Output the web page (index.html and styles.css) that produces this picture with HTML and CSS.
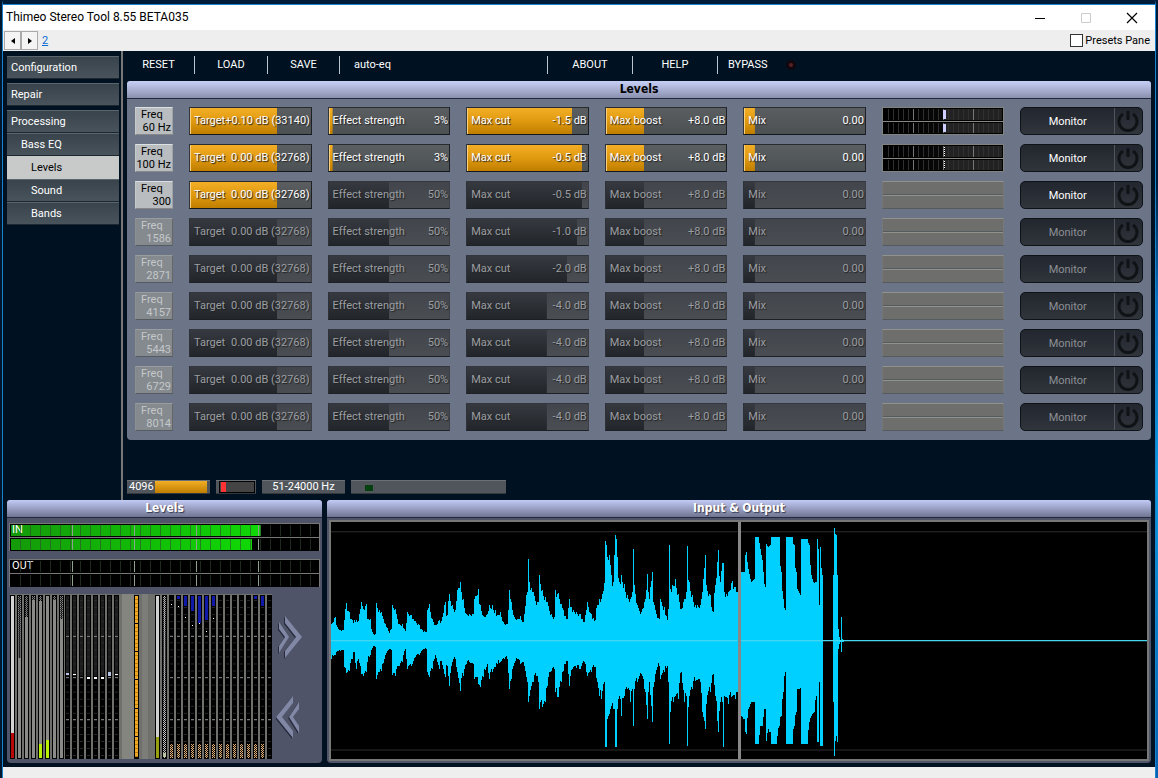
FILE: index.html
```html
<!DOCTYPE html>
<html lang="en">
    <head>
        <title>Thimeo Stereo Tool 8.55 BETA035</title>
        <meta charset="utf-8">
        <meta name="viewport" content="width=device-width, initial-scale=1.0">
        <link rel="stylesheet" href="styles.css">
    </head>
    <body>
        <div class="window">

            <header class="titlebar">
                <span class="title">Thimeo Stereo Tool 8.55 BETA035</span>
                <button type="button" class="win-btn" aria-label="Minimize">
                    <svg width="12" height="12" viewBox="0 0 12 12"><path d="M1 6.5h10" stroke="#000"/></svg>
                </button>
                <button type="button" class="win-btn" aria-label="Maximize" disabled>
                    <svg width="12" height="12" viewBox="0 0 12 12"><path d="M1.500 1.500h9v9h-9z" stroke="#ccc" fill="none"/></svg>
                </button>
                <button type="button" class="win-btn" aria-label="Close">
                    <svg width="12" height="12" viewBox="0 0 12 12"><path d="M1 1l10 10M11 1L1 11" stroke="#000" stroke-width="1.200"/></svg>
                </button>
            </header>

            <div class="toolbar">
                <button type="button" class="step" aria-label="Previous preset">
                    <svg width="4" height="6" viewBox="0 0 4 6"><path d="M4 0v6L0 3z"/></svg>
                </button>
                <button type="button" class="step" aria-label="Next preset">
                    <svg width="4" height="6" viewBox="0 0 4 6"><path d="M0 0v6l4-3z"/></svg>
                </button>
                <a class="preset" href="#">2</a>
                <input type="checkbox" id="presets" class="check">
                <label for="presets">Presets Pane</label>
            </div>

            <div class="app">
                <div class="upper">
                    <nav class="sidebar">
                        <button type="button" class="nav-top">Configuration</button>
                        <button type="button" class="nav-top">Repair</button>
                        <button type="button" class="nav-top">Processing</button>
                        <button type="button" class="nav-sub">Bass EQ</button>
                        <button type="button" class="nav-leaf active">Levels</button>
                        <button type="button" class="nav-leaf">Sound</button>
                        <button type="button" class="nav-leaf">Bands</button>
                    </nav>

                    <main class="main">
                        <div class="menu">
                            <button type="button">RESET</button>
                            <button type="button">LOAD</button>
                            <button type="button">SAVE</button>
                            <button type="button" class="left">auto-eq</button>
                            <button type="button">ABOUT</button>
                            <button type="button">HELP</button>
                            <button type="button" class="left bypass">BYPASS <span class="led"></span></button>
                        </div>

                        <section class="panel eq">
                            <h2 class="dark">Levels</h2>
                            <div class="rows" id="rows"></div>
                        </section>

                        <div class="status">
                            <span class="stat quality">4096<i></i></span>
                            <span class="stat load"><i></i></span>
                            <span class="stat">51-24000 Hz</span>
                            <span class="stat latency"><i></i></span>
                        </div>
                    </main>
                </div>

                <div class="lower">
                    <section class="panel levels">
                        <h2>Levels</h2>
                        <div class="io">
                            <div class="bar"><i style="width: 81%"></i><span>IN</span></div>
                            <div class="bar"><i style="width: 78%"></i></div>
                            <div class="bar out"><span>OUT</span></div>
                            <div class="bar"></div>
                        </div>
                        <div class="meters">
                            <svg id="bands" class="bands" viewBox="0 0 262 164" preserveAspectRatio="none" shape-rendering="crispEdges">
                                <defs>
                                    <pattern id="seg" width="5" height="7" patternUnits="userSpaceOnUse">
                                        <path d="M0 6h5v1H0z" fill="#2b2b2b"/>
                                    </pattern>
                                    <pattern id="check" width="2" height="2" patternUnits="userSpaceOnUse">
                                        <path d="M0 0h1v1H0zM1 1h1v1H1z" fill="#8a8a8a"/>
                                    </pattern>
                                    <pattern id="light" width="2" height="2" patternUnits="userSpaceOnUse">
                                        <path d="M0 0h1v1H0zM1 1h1v1H1z" fill="#ccc"/>
                                    </pattern>
                                    <pattern id="tan" width="2" height="2" patternUnits="userSpaceOnUse">
                                        <path d="M0 0h1v1H0zM1 1h1v1H1z" fill="#f0b878"/>
                                    </pattern>
                                </defs>
                            </svg>
                            <div class="pager">
                                <button type="button" aria-label="Next meters">
                                    <svg width="28" height="46" viewBox="0 0 28 46">
                                        <g fill="#262a3c" transform="translate(-1 1)"><path d="M3 8l10 15L3 39v-7l6-9-6-8zM9 2l17 21L9 44v-7l11-14L9 9z"/></g>
                                        <path fill="#8188a5" d="M3 8l10 15L3 39v-7l6-9-6-8zM9 2l17 21L9 44v-7l11-14L9 9z"/>
                                    </svg>
                                </button>
                                <button type="button" aria-label="Previous meters">
                                    <svg width="28" height="46" viewBox="0 0 28 46">
                                        <g fill="#262a3c" transform="translate(-1 1)"><path d="M23 8L13 23l10 16v-7l-6-9 6-8zM17 2L0 23l17 21v-7L6 23 17 9z"/></g>
                                        <path fill="#8188a5" d="M23 8L13 23l10 16v-7l-6-9 6-8zM17 2L0 23l17 21v-7L6 23 17 9z"/>
                                    </svg>
                                </button>
                            </div>
                        </div>
                    </section>

                    <section class="panel scope">
                        <h2>Input &amp; Output</h2>
                        <div class="waves">
                            <svg id="input" viewBox="18 80 1218 710" preserveAspectRatio="none"></svg>
                            <svg id="output" viewBox="423 80 1218 710" preserveAspectRatio="none"></svg>
                        </div>
                    </section>
                </div>
            </div>

            <footer class="foot"></footer>
        </div>
        <script src="script.js"></script>
    </body>
</html>
```

FILE: styles.css
```css
:root {
    --navy: #001222;
    --panel: #6c7488;
    --shade: #505468;
    --edge: #1b82cd;
}
* {
    box-sizing: border-box;
}
body {
    margin: 0;
    font-family: Roboto, Tahoma, sans-serif;
    font-size: 11px;
    line-height: 14px;
    color: white;
    background: linear-gradient(90deg, #00172e 50%, transparent 50%), linear-gradient(#001c38 180px, #0a70c0 300px, #0a9ae0 480px, #0860b0);
}
button {
    padding: 0;
    border: 0;
    background: none;
    font: inherit;
    color: inherit;
}
h2 {
    margin: 0;
    height: 18px;
    font-family: "DejaVu Sans Condensed", Tahoma, sans-serif;
    font-size: 12px;
    line-height: 17px;
    text-align: center;
    text-shadow: 1px 1px 1px #333850;
    border-bottom: 1px solid #22283e;
    border-radius: 3px 3px 0 0;
    background: linear-gradient(#c3caf5, #6f7590);
}
h2.dark {
    color: black;
    text-shadow: none;
    background: linear-gradient(#c8cff6, #8a91ae);
}
svg {
    display: block;
}
.window {
    display: flex;
    flex-direction: column;
    min-height: 100vh;
    margin: 0 2px;
    border: 1px solid var(--edge);
    border-top: 5px solid #001c38;
}

/* title bar and presets bar */
.titlebar {
    display: flex;
    height: 25px;
    background: white;
    color: black;
    box-shadow: 0 -1px var(--edge);
}
.title {
    flex: 1;
    padding-left: 3px;
    font-size: 12px;
    line-height: 24px;
}
.win-btn {
    display: grid;
    place-items: center;
    width: 46px;
}
.toolbar {
    display: flex;
    align-items: center;
    height: 21px;
    padding: 0 5px 0 1px;
    background: #eee;
    color: black;
}
.step {
    display: grid;
    place-items: center;
    width: 17px;
    height: 19px;
    border: 1px solid #aaa;
    background: #f4f4f4;
}
.preset {
    margin: 0 auto 0 4px;
    color: #0a6cd0;
}
.check {
    appearance: none;
    width: 13px;
    height: 13px;
    margin: 0 2px 0 0;
    border: 1px solid #333;
    background: white;
}

.app {
    flex: 1;
    display: flex;
    flex-direction: column;
    padding: 0 4px 4px;
    background: var(--navy);
}
.upper {
    display: flex;
}

/* sidebar */
.sidebar {
    width: 116px;
    padding: 5px 2px 0 0;
    border-right: 2px solid #777;
}
.sidebar button {
    display: block;
    width: 100%;
    height: 23px;
    padding-left: 4px;
    text-align: left;
    border-top: 1px solid #5a666e;
    border-bottom: 1px solid #1c272f;
    background: linear-gradient(#38434b, #48535b);
}
.sidebar .nav-top + .nav-top {
    margin-top: 4px;
}
.sidebar .nav-sub {
    padding-left: 14px;
}
.sidebar .nav-leaf {
    padding-left: 24px;
}
.sidebar .active {
    color: black;
    border-color: #c8caca;
    background: #c8caca;
}

/* top menu */
.main {
    flex: 1;
    min-width: 0;
}
.menu {
    display: grid;
    grid-template-columns: 72px 73px 72px 208px 85px 85px 1fr;
    height: 29px;
    padding: 5px 0 6px;
}
.menu button {
    line-height: 18px;
    border-right: 1px solid #b8c4d0;
}
.menu .left {
    padding-left: 14px;
    text-align: left;
}
.menu .bypass {
    padding-left: 10px;
    border: 0;
}
.led {
    display: inline-block;
    width: 10px;
    height: 10px;
    margin: 0 0 -2px 16px;
    border: 3px solid #10080e;
    border-radius: 50%;
    background: #5a2028;
}

.panel {
    border-radius: 4px;
    background: var(--shade);
}

/* levels rows */
.eq {
    margin: 1px 0 0 4px;
    background: var(--panel);
}
.rows {
    display: grid;
    gap: 9px;
    padding: 8px 8px 9px;
}
.row {
    display: grid;
    grid-template-columns: 38px repeat(7, minmax(0, 1fr));
    gap: 16px;
    height: 28px;
}
.freq {
    padding: 0 1px 0 5px;
    line-height: 13px;
    text-align: left;
    color: black;
    border: 1px solid;
    border-color: #dde0e2 #a0a4a6 #888 #c8caca;
    background: #b9bdbf;
}
.freq span {
    display: block;
    margin-left: -5px;
    text-align: right;
}
.freq.off {
    color: #c4c8ca;
    border-color: #999da0 #666 #555b60 #8c9092;
    background: #858a8f;
}
.slider {
    display: grid;
    grid-template-columns: auto 1fr;
    line-height: 25px;
    text-shadow: 1px 1px 1px #222;
    white-space: nowrap;
    border: 1px solid;
    border-color: #282c30 #1d2126 #14181c #33373c;
}
.slider * {
    grid-row: 1;
}
.slider label {
    grid-column: 1;
    z-index: 1;
    padding-left: 4px;
    pointer-events: none;
}
.slider output {
    grid-column: 2;
    z-index: 1;
    padding-right: 1px;
    text-align: right;
    pointer-events: none;
}
.slider input {
    grid-column: 1 / 3;
    appearance: none;
    width: 100%;
    height: 26px;
    margin: 0;
    background: linear-gradient(#f2ae26, #e09a10 50%, #c07e00) 0 0 / var(--fill) 100% no-repeat, linear-gradient(#5a5e61, #4c5154);
    box-shadow: inset 1px 0 #f8d080;
}
.slider input::-webkit-slider-thumb {
    appearance: none;
    width: 1px;
    height: 1px;
}
.slider.off {
    color: #9b9ea2;
    border-color: #33373d #3c4046 #1d2126 #2e3238;
}
.slider.off input {
    background: linear-gradient(#363a40, #22262b) 0 0 / var(--fill) 100% no-repeat, linear-gradient(#42464c, #4a4e53);
    box-shadow: none;
}
.peaks {
    display: grid;
    grid-template-rows: 1fr 1fr;
    gap: 1px;
    border: 1px solid #80837e;
    background: #8a8a84;
}
.peak {
    display: flex;
    justify-content: center;
    padding: 1px 0;
    border: 1px solid black;
    background:
        repeating-linear-gradient(90deg, transparent 0 29px, #777 29px 30px),
        repeating-linear-gradient(90deg, transparent 0 4px, #303030 4px 5px),
        linear-gradient(90deg, black, #080808 50%, #222 50%);
}
.peak i {
    margin-left: 2px;
    width: 3px;
    background: #cfcfff;
}
.peak i.dots {
    width: 1px;
    background: repeating-linear-gradient(white 0 1px, black 1px 2px);
}
.peaks.off {
    gap: 0;
    border-color: #92928c #777 #555a5e #777;
    background: #6e6e6c;
}
.peaks.off .peak {
    border: 0;
    background: none;
}
.peaks.off .peak + .peak {
    border-top: 1px solid #92928c;
    box-shadow: 0 -1px #555a5e;
}
.monitor {
    display: flex;
    border: 1px solid #0f1318;
    border-radius: 5px;
    background: linear-gradient(#22262e, #30343b);
}
.monitor.off {
    color: #8c9095;
}
.monitor .listen {
    flex: 1;
    line-height: 25px;
}
.monitor .power {
    display: grid;
    place-items: center;
    width: 28px;
    border-left: 1px solid #50555c;
}

/* status strip */
.status {
    display: flex;
    gap: 6px;
    height: 15px;
    margin: 40px 0 5px 4px;
}
.stat {
    width: 83px;
    height: 14px;
    line-height: 12px;
    text-align: center;
    border-top: 1px solid #6a7076;
    border-bottom: 1px solid #33383c;
    background: #50565b;
}
.quality {
    display: flex;
    gap: 1px;
    padding: 0 3px 0 2px;
}
.quality i {
    flex: 1;
    background: linear-gradient(#f2ae26, #c07e00);
}
.load {
    width: 40px;
    padding-left: 3px;
}
.load i {
    display: block;
    width: 36px;
    height: 12px;
    border: 1px solid black;
    background: linear-gradient(90deg, #444 1px, #f33 1px 6px, #444 6px);
}
.latency {
    width: 155px;
    padding: 4px 0 0 14px;
}
.latency i {
    display: block;
    width: 8px;
    height: 6px;
    background: #063f10;
}

/* lower panels */
.lower {
    flex: 1;
    display: grid;
    grid-template-columns: 315px minmax(0, 1fr);
    gap: 5px;
}
.lower .panel {
    display: flex;
    flex-direction: column;
}
.io {
    padding: 5px 2px 0 2px;
}
.bar {
    position: relative;
    height: 14px;
    border: 1px solid #777;
    border-width: 1px 1px 0;
    background: black;
}
.bar.out {
    margin-top: 8px;
}
.bar i {
    position: absolute;
    inset: 1px auto 1px 1px;
    background: linear-gradient(90deg, #149a0a, #10d806);
}
.bar::after {
    content: "";
    position: absolute;
    inset: 1px;
    background:
        repeating-linear-gradient(90deg, transparent 0 61px, #8fa08f 61px 62px),
        repeating-linear-gradient(90deg, transparent 0 9px, rgba(50, 70, 50, 0.6) 9px 10px);
}
.bar span {
    position: absolute;
    left: 2px;
    line-height: 12px;
}
.meters {
    flex: 1;
    display: flex;
    padding: 7px 0 4px 3px;
}
.bands {
    width: 262px;
    height: 100%;
    background: #6f6f6b;
}
.pager {
    display: grid;
    align-content: center;
    gap: 34px;
    padding: 2px 0 0 4px;
}
.waves {
    flex: 1;
    display: grid;
    grid-template-columns: 1fr 1fr;
    gap: 3px;
    margin: 2px;
    border: 2px solid #777;
    background: #888;
}
.waves svg {
    width: 100%;
    height: 100%;
    min-height: 100px;
    background: black;
}
.foot {
    height: 11px;
    background: #eee;
}
```

FILE: script.js
```javascript
const svgNS = 'http://www.w3.org/2000/svg';

// freq, target, strength, [cut, fill], state
const bands = [
    ['60 Hz', '+0.10 dB (33140)', 3, ['-1.5', 87], 'on'],
    ['100 Hz', '0.00 dB (32768)', 3, ['-0.5', 95], 'on'],
    ['300', '0.00 dB (32768)', 50, ['-0.5', 95], 'half'],
    ['1586', '0.00 dB (32768)', 50, ['-1.0', 91], 'off'],
    ['2871', '0.00 dB (32768)', 50, ['-2.0', 83], 'off'],
    ['4157', '0.00 dB (32768)', 50, ['-4.0', 66], 'off'],
    ['5443', '0.00 dB (32768)', 50, ['-4.0', 66], 'off'],
    ['6729', '0.00 dB (32768)', 50, ['-4.0', 66], 'off'],
    ['8014', '0.00 dB (32768)', 50, ['-4.0', 66], 'off']
];

function slider(id, label, value, fill, on) {
    return `<div class="slider ${on ? '' : 'off'}">
        <input type="range" id="${id}" min="0" max="100" value="${fill}" style="--fill: ${fill}%">
        <label for="${id}">${label}</label><output for="${id}">${value}</output>
    </div>`;
}

function peaks(i) {
    if (i > 1) return '<div class="peaks off"><div class="peak"></div><div class="peak"></div></div>';
    const mark = i === 0 ? '<i></i>' : '<i class="dots"></i>';
    return `<div class="peaks"><div class="peak">${mark}</div><div class="peak">${mark}</div></div>`;
}

document.getElementById('rows').innerHTML = bands.map(([freq, target, strength, cut, state], i) => {
    const on = state === 'on';
    const off = state === 'off' ? 'off' : '';
    return `<div class="row">
        <button type="button" class="freq ${off}">Freq<span>${freq}</span></button>
        ${slider('target' + i, 'Target', target, 72, !off)}
        ${slider('strength' + i, 'Effect strength', strength + '%', strength, on)}
        ${slider('cut' + i, 'Max cut', cut[0] + ' dB', cut[1], on)}
        ${slider('boost' + i, 'Max boost', '+8.0 dB', 32, on)}
        ${slider('mix' + i, 'Mix', '0.00', 9, on)}
        ${peaks(i)}
        <div class="monitor ${off}">
            <button type="button" class="listen">Monitor</button>
            <button type="button" class="power" aria-label="Power">
                <svg width="22" height="22" viewBox="0 0 22 22" fill="none" stroke="#101316" stroke-width="3">
                    <path d="M6 4a9 9 0 1 0 10 0M11 1v9"/>
                </svg>
            </button>
        </div>
    </div>`;
}).join('');

document.querySelectorAll('.slider input').forEach(input => input.addEventListener('input', function() {
    this.style.setProperty('--fill', this.value + '%');
}));

// vertical band meters
const meters = document.getElementById('bands');

function rect(x, y, w, h, fill) {
    const r = document.createElementNS(svgNS, 'rect');
    Object.entries({ x, y, width: w, height: h, fill }).forEach(([k, v]) => r.setAttribute(k, v));
    meters.appendChild(r);
}

// gate meters: [checked part from the top, colour at the bottom, its height]
const gates = [[0, '#b80808', 25], [62], [21], [4], [5, '#b8f008', 14], [0, '#b8f008', 18], [4], [23]];
gates.forEach(([drop, color, height], i) => {
    const x = i * 7;
    rect(x, 1, 5, 163, 'black');
    rect(x + 1, 2, 3, 161, i === 0 ? '#d4d4d4' : '#8a8a86');
    if (drop) {
        rect(x + 1, 2, 3, drop, 'black');
        rect(x + 1, 2, 3, drop, 'url(#check)');
    }
    if (color) rect(x + 1, 163 - height, 3, height, color);
});

function segments(x, split) {
    rect(x, 1, 5, 163, 'black');
    if (split) rect(x + 1, 2, 3, 80, '#1c1c1c');
    rect(x + 1, 2, 3, 161, 'url(#seg)');
    [42, 83, 124].forEach(y => rect(x + 1, y, 3, 1, '#777'));
}

const marks = [79, 80, 0, 83, 83, 83, 78, 80];
marks.forEach((y, i) => {
    const x = 55 + i * 7;
    segments(x, true);
    if (y) rect(x + 1, y, 3, i === 6 ? 4 : i === 1 || i === 7 ? 1 : 2, i === 0 || i === 6 ? '#b8c4e8' : 'white');
});

rect(112, 0, 12, 164, '#858580');
rect(132, 0, 6, 164, '#7c7c78');
rect(124, 1, 5, 163, 'black');
for (let y = 2; y < 162; y += 4) {
    rect(125, y, 3, 3, '#f0a828');
    rect(125, y + 3, 3, 1, y % 28 === 26 ? 'black' : '#c07e00');
}

rect(145, 1, 5, 163, 'black');
rect(146, 2, 3, 161, '#d0d0d0');
rect(146, 142, 3, 21, '#98a010');
rect(152, 1, 5, 163, 'black');
rect(153, 2, 3, 161, 'url(#light)');
rect(153, 158, 3, 4, '#b8c4a0');

const blues = [0, 3, 10, 15, 27, 24, 10, 0, 0, 0, 0, 0, 3, 10, 0];
const dots = [10, 12, 23, 31, 29, 37, 24];
blues.forEach((height, i) => {
    const x = 159 + i * 7;
    segments(x, false);
    if (height) rect(x + 1, 2, 3, height, '#1018a8');
    if (dots[i]) rect(x + 2, dots[i], 1, 1, 'white');
    if (i < 14) rect(x + 1, 149, 3, 14, 'url(#tan)');
});

// waveform envelopes: x, top, bottom, with the centre line on y = 436
const inputWave = [
    [18,385,490],[28,365,480],[38,400,468],[54,405,465],[56,375,515],[62,322,533],[70,350,525],[80,375,490],
    [86,375,470],[92,375,520],[98,378,490],[108,320,535],[114,340,540],[122,325,530],[124,370,500],[134,370,480],
    [138,400,465],[146,420,452],[148,415,455],[152,322,550],[160,345,530],[168,350,525],[180,385,480],[192,412,462],
    [196,400,465],[199,330,538],[210,342,540],[220,385,510],[230,385,500],[240,408,462],[246,350,520],[258,360,510],
    [270,378,485],[280,388,480],[290,405,465],[302,410,460],[306,345,530],[310,325,545],[320,370,520],[330,390,480],
    [340,375,520],[348,378,495],[358,320,545],[364,360,510],[370,295,570],[380,330,500],[390,345,490],[395,285,530],
    [404,260,585],[412,310,540],[422,355,505],[432,355,500],[442,355,505],[446,310,550],[457,280,565],[464,330,575],
    [474,362,545],[486,355,505],[490,330,550],[500,330,530],[508,345,515],[516,360,505],[524,350,500],[536,385,492],
    [546,385,490],[552,283,580],[558,320,550],[564,360,510],[574,370,490],[584,362,505],[594,380,500],[602,300,545],
    [606,290,560],[609,190,620],[612,260,600],[624,290,560],[634,320,540],[638,320,560],[641,240,640],[650,285,635],
    [658,305,620],[666,320,570],[676,355,525],[686,365,520],[690,285,590],[697,292,605],[706,325,560],[714,345,525],
    [724,370,495],[732,312,570],[742,345,515],[752,350,518],[764,355,520],[776,380,500],[786,320,540],[796,355,530],
    [808,375,515],[814,330,560],[820,312,600],[828,310,610],[836,262,560],[839,136,755],[842,150,755],[846,185,670],
    [852,180,655],[862,260,640],[867,180,640],[869,118,755],[872,130,755],[876,185,640],[882,260,600],[888,240,660],
    [895,265,600],[905,300,580],[915,310,620],[919,290,580],[922,160,690],[926,270,580],[935,330,560],[947,350,535],
    [959,310,590],[966,235,670],[971,310,560],[979,230,680],[985,330,560],[1000,370,510],[1005,310,550],[1015,335,530],
    [1027,375,510],[1029,340,560],[1032,148,745],[1035,280,650],[1049,250,600],[1059,295,610],[1067,340,530],
    [1077,310,620],[1083,290,600],[1086,152,750],[1090,260,600],[1101,300,580],[1109,330,555],[1123,330,560],
    [1131,290,650],[1139,178,700],[1143,270,625],[1155,300,590],[1162,350,535],[1169,270,600],[1179,165,710],
    [1184,260,620],[1189,202,620],[1192,202,755],[1196,290,600],[1209,290,625],[1219,258,600],[1229,275,610],[1237,275,600]
];
const outputWave = [
    [423,230,660],[430,230,670],[436,170,715],[444,220,640],[452,260,620],[462,250,620],[464,126,745],[474,126,745],
    [480,160,690],[486,195,690],[492,265,640],[494,275,640],[496,145,735],[504,155,700],[508,150,710],[511,126,745],
    [528,126,745],[535,126,690],[541,230,660],[548,310,590],[553,345,530],[556,126,745],[575,126,745],[580,150,690],
    [586,230,650],[590,280,580],[600,300,578],[603,130,745],[620,130,745],[626,150,680],[632,240,660],[640,262,650],
    [647,260,600],[650,130,740],[653,160,740],[656,330,560],[660,155,750],[664,240,750],[667,360,520],[669,435,438],
    [696,435,438],[698,240,620],[702,98,780],[706,120,720],[709,240,740],[713,400,460],[715,425,445],[720,433,440],
    [722,365,470],[724,365,470],[726,430,440],[732,435,438],[1641,435,438]
];

function drawWave(id, points, steady) {
    const svg = document.getElementById(id);
    const [left] = points[0];
    let d = '';
    let p = 0;
    for (let x = left; x < left + 1218; x += 3) {
        while (p < points.length - 2 && points[p + 1][0] <= x) p++;
        const [x0, t0, b0] = points[p];
        const [x1, t1, b1] = points[p + 1];
        // keep the tips, roughen the slopes between them
        const tip = x - x0 < 3;
        const k = tip ? 0 : (x - x0) / (x1 - x0);
        const n = tip || steady ? 1 : 1 - ((x * 7919) % 31) / 31 * 0.12;
        const m = tip || steady ? 1 : 1 - ((x * 6101) % 29) / 29 * 0.15;
        const top = 436 - (436 - t0 - (t1 - t0) * k) * n;
        const bottom = 436 + (b0 + (b1 - b0) * k - 436) * m;
        d += `M${x} ${top.toFixed(0)}h3V${bottom.toFixed(0)}h-3z`;
    }
    svg.innerHTML = `<path d="M${left} 109.500h1218M${left} 763.500h1218" stroke="#2c2c2c" stroke-width="3"/>
        <path d="${d}" fill="#00d0ff" shape-rendering="crispEdges"/>
        <path d="M${left} 436h1218" stroke="#58d8ec" stroke-width="3"/>`;
}

drawWave('input', inputWave, false);
drawWave('output', outputWave, true);
```
